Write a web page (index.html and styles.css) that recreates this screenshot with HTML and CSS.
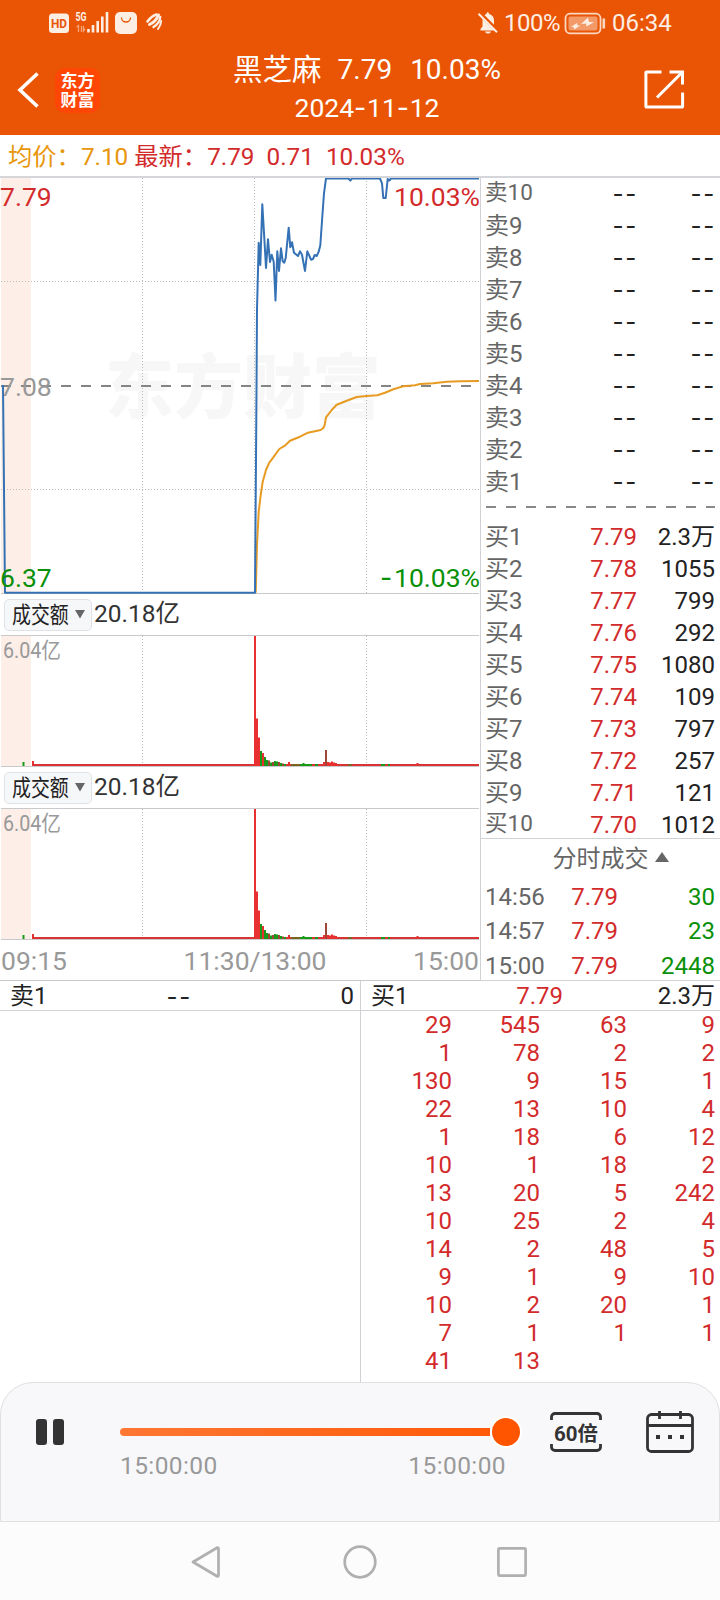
FILE: index.html
```html
<!DOCTYPE html>
<html lang="zh-CN">
<head>
<meta charset="utf-8">
<title>黑芝麻 2024-11-12</title>
<link rel="stylesheet" href="styles.css">
</head>
<body>
<header class="top">
  <div class="status">
    <svg class="status-left" width="120" height="26" viewBox="48 10 120 26">
      <rect x="49" y="13.500" width="20" height="19.500" rx="3.500" fill="#fdeee4"/>
      <text x="51" y="28" class="hd" textLength="16" lengthAdjust="spacingAndGlyphs">HD</text>
      <text x="75.500" y="21" class="g5" textLength="11" lengthAdjust="spacingAndGlyphs">5G</text>
      <path d="M76.500 27l2-1.500v6.500M81.500 26v6M83.500 26v5l1.500-2" stroke="#f6a377" fill="none" stroke-width="1.300"/>
      <path d="M88.500 29v3.500M93 25v7.500M97.700 21v11.500M102.300 16.500v16M107 12v20.500" stroke="#fdeee4" stroke-width="2.600" fill="none"/>
      <rect x="115" y="12" width="22" height="22" rx="5" fill="#fdeee4"/>
      <path d="M121.500 17.500a4.500 4.500 0 0 0 9 0" fill="none" stroke="#e95504" stroke-width="1.300"/>
      <g fill="none" stroke="#fdeee4" stroke-linecap="round">
        <path d="M147.500 21.500C150 18 153 15.500 156.500 14.500" stroke-width="2.600"/>
        <path d="M149.500 24.500C154 22.500 157 19 158.500 15" stroke-width="3"/>
        <path d="M153.500 27C157.500 24.500 160 21 160.200 17" stroke-width="2.400"/>
        <path d="M158 29C160 26.500 161 24 161.200 21" stroke-width="2"/>
      </g>
    </svg>
    <div class="status-right">
      <svg width="22" height="24" viewBox="477 11 22 24">
        <path d="M480.500 30.500v-1.500l2-2.500v-6c0-4 2-6 4-6.500 0-2.500 2.500-2.500 2.500 0 3 .7 5 3 5 6.500v6l2 2.500v1.500z" fill="#fdeee4"/>
        <path d="M485 31.500h6c-1 2.800-5 2.800-6 0z" fill="#fdeee4"/>
        <path d="M479.500 13l18.500 18.500" stroke="#e95504" stroke-width="4"/>
        <path d="M478.500 13.800l18.500 18.500" stroke="#fdeee4" stroke-width="2"/>
      </svg>
      <span class="pct">100%</span>
      <svg class="battery" width="42" height="24" viewBox="564 11 42 24">
        <rect x="565.500" y="13.700" width="35" height="19.600" rx="4.500" fill="none" stroke="#fbd7c2" stroke-width="1.800"/>
        <rect x="568.500" y="16.500" width="29" height="14" rx="2" fill="#f29a68"/>
        <path d="M571 27l6-4 .5 2.500h3l-6.500 4-.5-2.500zM581 24l7-6.500 1 4.500h5l-7.500 4.500-.5-3z" fill="#fdeee4"/>
        <path d="M603.800 18.500v10" stroke="#fbd7c2" stroke-width="2.600"/>
      </svg>
      <span class="clock">06:34</span>
    </div>
  </div>
  <div class="titlebar">
    <svg class="back" width="24" height="40" viewBox="16 70 24 40"><path d="M37.500 73.500L20 90l17.500 16.500" fill="none" stroke="#fff" stroke-width="3.600"/></svg>
    <div class="logo"><span>东方</span><span>财富</span></div>
    <div class="title">
      <div class="title-main"><span class="stock">黑芝麻</span><span>7.79</span><span>10.03%</span></div>
      <div class="title-date">2024<i>-</i>11<i>-</i>12</div>
    </div>
    <svg class="share" width="42" height="42" viewBox="642 68 42 42"><path d="M660.500 72h-15a.6.600 0 0 0-.6.600V106.500a.6.600 0 0 0 .6.600H681a.6.600 0 0 0 .6-.6V92.500M668.500 72h13v12.500M681 72.500L656 97.500" fill="none" stroke="#fff" stroke-width="3"/></svg>
  </div>
</header>

<div class="quote">
  <span class="avg">均价：7.10</span><span class="now">最新：7.79</span><span>0.71</span><span>10.03%</span>
</div>

<main class="market">
  <section class="charts">
    <svg width="480" height="417" viewBox="0 178 480 417" class="chart">
      <rect x="1" y="178" width="30" height="415" fill="#fdeee8"/>
      <text x="105" y="413" class="watermark" textLength="276" lengthAdjust="spacingAndGlyphs">东方财富</text>
      <path d="M1 281.500H479M1 489.500H479M142.500 178V593M254.500 178V593M366.500 178V593" class="dots"/>
      <path d="M1 386H472" class="mid"/>
      <path d="M1 593.500H479" class="axis"/>
      <text x="0" y="205.700" class="lab red">7.79</text>
      <text x="480" y="205.700" class="lab red end">10.03%</text>
      <text x="0" y="396" class="lab gray">7.08</text>
      <path class="line orange" d="M255.700 592.700L257 545 258.700 511.700 260.700 495 262.700 481.700 266 470 269.300 462.700 273.300 457.300 279.300 449 285.300 445.300 290 440.700 300 436.700 308 432.700 320.700 430 323.300 428 324.700 425 326 417.300 331.700 410 336.700 404.700 346.700 400.700 356.700 397 366.700 396 377.300 395.300 385 392.700 393.300 389.300 403.300 386.300 415 385.300 420 384 433.300 383.300 446.700 381.700 460 381.200 479 381"/>
      <path class="line blue" d="M3 385L5 592.700H255L256.300 420 257 310 258.700 242.700 260.300 265 262.300 204.300 264.300 238 266 268 268 239.300 270 262 271.700 254.700 273.700 261.700 275.500 300.500 277.300 251.300 279 271 281 248.300 282.700 261.300 284.300 262.700 285.700 258 288.700 227.700 290.300 247.300 292 242.300 294 252.700 298 256 300 251.300 302 254.700 305 271 307.300 251.300 309 255 311 259.700 313 259 314.700 255 316.700 256 318.700 251.700 320.300 245.300 322.300 216.700 324 193.300 326 178.500H348.500L350.300 180.500 352 178.500H380L382 183.300 383.300 198H385.700L387.700 179 389.300 180.500 391 178.500H479"/>
      <text x="0" y="586.700" class="lab green">6.37</text>
      <text x="480" y="586.700" class="lab green end">10.03%</text>
      <text x="380" y="586.700" class="lab green minus">-</text>
    </svg>

    <div class="picker"><button><span>成交额</span><svg width="10" height="9" viewBox="0 0 10 9"><path d="M0 0H10L5 8.500Z" fill="#666"/></svg></button><b>20.18亿</b></div>
    <svg width="480" height="132" viewBox="0 635 480 132" class="chart">
      <g id="volume">
        <rect x="1" y="636" width="30" height="130" fill="#fdeee8"/>
        <path d="M142.500 636V766M254.500 636V766M366.500 636V766" class="dots"/>
        <path d="M1 635.500H479M1 766.500H479" class="axis"/>
        <text x="3" y="658" class="lab small gray" textLength="58" lengthAdjust="spacingAndGlyphs">6.04亿</text>
        <path d="M33 765H479" stroke="#d93333" stroke-width="2"/>
        <path d="M33 766v-5M255 766V636M257 766V718.500M259 766V737.500M263 766V753M289 766V762M324 766V762M328 766V762M330 766V762.500M332 766V761.500M334 766V762.500M336 766V763M417.500 766V763" stroke="#e93030" stroke-width="2"/>
        <path d="M23.500 766v-4M261 766V751M265 766V757M267 766V760M271 766V762.500M275 766V761M277 766V761.500M281 766V763M285 766V764M303.500 766V763" stroke="#189a18" stroke-width="2"/>
        <path d="M269 766V760.500M273 766V762M279 766V762M283 766V763.500M326 766V750" stroke="#9f4636" stroke-width="2"/>
        <path d="M291 765H301M348 765h4" stroke="#7c6320" stroke-width="2"/>
        <path d="M300 765h12M315 765h3M381 765h4M388 765h2" stroke="#189a18" stroke-width="2"/>
      </g>
    </svg>
    <div class="picker"><button><span>成交额</span><svg width="10" height="9" viewBox="0 0 10 9"><path d="M0 0H10L5 8.500Z" fill="#666"/></svg></button><b>20.18亿</b></div>
    <svg width="480" height="132" viewBox="0 635 480 132" class="chart"><use href="#volume"/></svg>
    <div class="times"><span>09:15</span><span class="noon">11:30/13:00</span><span>15:00</span></div>
  </section>

  <aside class="book">
    <div class="rows sell">
      <div class="row ten"><span>卖10</span><i>--</i><i>--</i></div>
      <div class="row"><span>卖9</span><i>--</i><i>--</i></div>
      <div class="row"><span>卖8</span><i>--</i><i>--</i></div>
      <div class="row"><span>卖7</span><i>--</i><i>--</i></div>
      <div class="row"><span>卖6</span><i>--</i><i>--</i></div>
      <div class="row"><span>卖5</span><i>--</i><i>--</i></div>
      <div class="row"><span>卖4</span><i>--</i><i>--</i></div>
      <div class="row"><span>卖3</span><i>--</i><i>--</i></div>
      <div class="row"><span>卖2</span><i>--</i><i>--</i></div>
      <div class="row"><span>卖1</span><i>--</i><i>--</i></div>
    </div>
    <svg class="split" width="229" height="2"><path d="M0 1H229" stroke="#888" stroke-width="2" stroke-dasharray="10 10"/></svg>
    <div class="rows buy">
      <div class="row"><span>买1</span><em>7.79</em><b>2.3万</b></div>
      <div class="row"><span>买2</span><em>7.78</em><b>1055</b></div>
      <div class="row"><span>买3</span><em>7.77</em><b>799</b></div>
      <div class="row"><span>买4</span><em>7.76</em><b>292</b></div>
      <div class="row"><span>买5</span><em>7.75</em><b>1080</b></div>
      <div class="row"><span>买6</span><em>7.74</em><b>109</b></div>
      <div class="row"><span>买7</span><em>7.73</em><b>797</b></div>
      <div class="row"><span>买8</span><em>7.72</em><b>257</b></div>
      <div class="row"><span>买9</span><em>7.71</em><b>121</b></div>
      <div class="row ten"><span>买10</span><em>7.70</em><b>1012</b></div>
    </div>
    <div class="ticks">
      <div class="ticks-title">分时成交<svg width="14" height="10" viewBox="0 0 14 10"><path d="M7 0L14 10H0Z" fill="#666"/></svg></div>
      <div class="tick"><span>14:56</span><em>7.79</em><u>30</u></div>
      <div class="tick"><span>14:57</span><em>7.79</em><u>23</u></div>
      <div class="tick"><span>15:00</span><em>7.79</em><u>2448</u></div>
    </div>
  </aside>
</main>

<section class="queues">
  <div class="queue">
    <div class="queue-head"><span>卖1</span><i>--</i><b>0</b></div>
  </div>
  <div class="queue">
    <div class="queue-head right"><span>买1</span><em>7.79</em><b>2.3万</b></div>
    <div class="orders">
      <span>29</span><span>545</span><span>63</span><span>9</span>
      <span>1</span><span>78</span><span>2</span><span>2</span>
      <span>130</span><span>9</span><span>15</span><span>1</span>
      <span>22</span><span>13</span><span>10</span><span>4</span>
      <span>1</span><span>18</span><span>6</span><span>12</span>
      <span>10</span><span>1</span><span>18</span><span>2</span>
      <span>13</span><span>20</span><span>5</span><span>242</span>
      <span>10</span><span>25</span><span>2</span><span>4</span>
      <span>14</span><span>2</span><span>48</span><span>5</span>
      <span>9</span><span>1</span><span>9</span><span>10</span>
      <span>10</span><span>2</span><span>20</span><span>1</span>
      <span>7</span><span>1</span><span>1</span><span>1</span>
      <span>41</span><span>13</span>
    </div>
  </div>
</section>

<section class="player">
  <svg class="pause" width="28" height="26"><rect width="11" height="26" rx="3" fill="#333"/><rect x="17" width="11" height="26" rx="3" fill="#333"/></svg>
  <div class="progress">
    <div class="track"><div class="bar"></div><div class="thumb"></div></div>
    <div class="progress-times"><span>15:00:00</span><span>15:00:00</span></div>
  </div>
  <svg class="speed" width="52" height="40" viewBox="0 0 52 40">
    <path d="M1.500 8V5a3.500 3.500 0 0 1 3.500-3.500H47A3.500 3.500 0 0 1 50.500 5V8M1.500 32v3A3.500 3.500 0 0 0 5 38.500H47a3.500 3.500 0 0 0 3.500-3.500V32" fill="none" stroke="#333" stroke-width="2.800"/>
    <text x="4" y="28.500" textLength="44" lengthAdjust="spacingAndGlyphs">60倍</text>
  </svg>
  <svg class="calendar" width="48" height="42" viewBox="0 0 48 42">
    <rect x="1.500" y="3.500" width="45" height="37" rx="4" fill="none" stroke="#333" stroke-width="2.800"/>
    <path d="M1.500 14.500H46.500M13.500 0V8M34.500 0V8" stroke="#333" stroke-width="2.800"/>
    <path d="M10 24h4v4h-4zM22 24h4v4h-4zM34 24h4v4h-4z" fill="#333"/>
  </svg>
</section>

<nav class="nav">
  <svg width="30" height="34" viewBox="190 1544 30 34"><path d="M193 1561L217.500 1546.500Q218.500 1546.500 218.500 1547.500V1574.500Q218.500 1575.500 217.500 1575.500Z" fill="none" stroke="#b0b0b0" stroke-width="2.700" stroke-linejoin="round"/></svg>
  <svg class="home" width="34" height="34"><circle cx="17" cy="17" r="15.300" fill="none" stroke="#b0b0b0" stroke-width="2.700"/></svg>
  <svg width="30" height="30"><rect x="1.400" y="1.400" width="27.200" height="27.200" rx="1.500" fill="none" stroke="#b0b0b0" stroke-width="2.700"/></svg>
</nav>
</body>
</html>
```
FILE: styles.css
```css
* { box-sizing: border-box; }
body {
  margin: 0;
  width: 720px;
  height: 1600px;
  overflow: hidden;
  background: #fff;
  color: #222;
  font: 24px/1 Roboto, "Noto Sans CJK SC", sans-serif;
}
svg { display: block; flex: none; }
i, em { font-style: normal; }
b { font-weight: 400; }
u { text-decoration: none; }

/* header */
.top { height: 135px; background: #e95504; color: #fff; }
.status {
  display: flex;
  justify-content: space-between;
  height: 46px;
  padding: 10px 48px 0 48px;
  color: #fdeee4;
}
.hd { font: 700 13.500px Roboto, sans-serif; fill: #e95504; }
.g5 { font: 700 12px Roboto, sans-serif; fill: #fdeee4; }
.status-right { display: flex; align-items: center; height: 26px; }
.pct { margin-left: 5px; width: 60px; letter-spacing: -.5px; }
.clock { margin-left: 6px; width: 60px; }
.titlebar { display: flex; height: 89px; padding-left: 16px; }
.back { margin-top: 24px; }
.logo {
  display: flex;
  flex-direction: column;
  justify-content: center;
  align-items: center;
  width: 45px;
  height: 45px;
  margin: 22px 0 0 15px;
  border-radius: 10px;
  background: #ff4604;
  font-size: 17px;
  font-weight: 700;
  line-height: 19px;
}
.title {
  display: flex;
  flex-direction: column;
  align-items: center;
  width: 380px;
  margin: 4px 0 0 77px;
}
.title-main { display: flex; align-items: center; gap: 18px; font-size: 28px; line-height: 40px; }
.stock { font-size: 29.500px; margin-right: -2px; }
.title-date { font-size: 26.500px; line-height: 35px; }
.title-date i { font-family: Inter, sans-serif; letter-spacing: .7px; }
.share { margin: 22px 0 0 86px; }

.quote {
  display: flex;
  gap: 12px;
  height: 43px;
  padding: 2px 0 0 8px;
  border-bottom: 2px solid #d4d6da;
  font-size: 24.300px;
  line-height: 40px;
  color: #d32b2b;
  white-space: nowrap;
}
.avg { color: #e8960c; margin-right: -6px; }

/* charts */
.market { display: flex; height: 803px; border-bottom: 1px solid #d0d2d5; }
.charts { width: 480px; }
.chart { overflow: hidden; }
.charts > .chart:first-child { margin-bottom: -1px; }
.dots { fill: none; stroke: #bbb; stroke-width: 1; stroke-dasharray: 1 2; }
.mid { stroke: #858585; stroke-width: 2; stroke-dasharray: 10 10; }
.axis { stroke: #c9c9cb; stroke-width: 1; }
.line { fill: none; stroke-width: 2; stroke-linejoin: round; }
.blue { stroke: #3572b5; }
.orange { stroke: #e79b22; }
.watermark { font: 900 70px "Noto Sans CJK SC", sans-serif; fill: #f7f7f7; }
.lab { font-family: Roboto, "Noto Sans CJK SC", sans-serif; font-size: 26.500px; }
.small { font-size: 21.500px; }
.end { text-anchor: end; }
.red { fill: #d32b2b; }
.green { fill: #089008; }
.gray { fill: #999; }
.minus { font-family: Inter, sans-serif; }
.picker { display: flex; align-items: center; gap: 2px; height: 41px; padding-left: 4px; }
.picker button {
  display: flex;
  align-items: center;
  width: 88px;
  height: 32px;
  padding: 0 0 0 7px;
  border: 1px solid #dfe2e6;
  border-radius: 5px;
  background: #f6f7f9;
  color: #222;
  font: 22.500px/26px "Noto Sans CJK SC", sans-serif;
}
.picker button span { width: 63px; margin-top: -4px; white-space: nowrap; transform: scaleX(.84); transform-origin: left; }
.picker b { color: #333; font-size: 24.500px; }
.times {
  display: flex;
  justify-content: space-between;
  height: 41px;
  padding: 0 1px;
  border-bottom: 1px solid #c9c9cb;
  color: #999;
  font-size: 26.500px;
  line-height: 42px;
}
.noon { padding-left: 30px; }

/* order book */
.book { width: 240px; border-left: 1px solid #d0d2d5; }
.row {
  display: grid;
  grid-template-columns: 78px 74px 78px;
  height: 32px;
  padding-left: 4px;
  line-height: 32px;
  text-align: right;
  white-space: nowrap;
}
.row span { color: #666; text-align: left; }
.row i { margin-right: -1px; }
.row i, .queue-head i { font-family: Inter, sans-serif; letter-spacing: 1.700px; }
.row em, .tick em, .queue-head em, .orders { color: #d32b2b; }
.ten span { font-size: 22.500px; line-height: 28px; }
.split { margin: 8px 0 13px 5px; }
.buy { height: 318px; border-bottom: 1px solid #d0d2d5; }
.ticks-title {
  display: flex;
  align-items: center;
  justify-content: center;
  gap: 6px;
  height: 40px;
  padding-left: 20px;
  color: #666;
}
.ticks-title svg { margin-top: -5px; }
.tick {
  display: grid;
  grid-template-columns: 70px 63px 97px;
  height: 34.300px;
  padding-left: 4px;
  line-height: 36px;
  text-align: right;
}
.tick span { color: #666; text-align: left; }
.tick u { color: #089008; }

/* order queues */
.queues { display: flex; height: 401px; }
.queue { width: 360px; }
.queue + .queue { border-left: 1px solid #d0d2d5; }
.queue-head {
  display: grid;
  grid-template-columns: 106px 76px 162px;
  height: 30px;
  padding-left: 10px;
  border-bottom: 1px solid #d0d2d5;
  line-height: 31px;
  text-align: right;
}
.queue-head.right { grid-template-columns: 114px 78px 152px; }
.queue-head span { text-align: left; }
.orders {
  display: grid;
  grid-template-columns: 91px 88px 87px 88px;
  grid-auto-rows: 28px;
  line-height: 28px;
  text-align: right;
}

/* replay controls */
.player {
  display: flex;
  height: 140px;
  padding: 0 25px 0 35px;
  border: 1px solid #e0e0e2;
  border-radius: 33px 33px 0 0;
  background: #f8f8fa;
}
.pause { margin-top: 36px; }
.progress { width: 402px; margin: 34px 0 0 56px; }
.track { display: flex; align-items: center; height: 30px; }
.bar { width: 370px; height: 8px; border-radius: 4px 0 0 4px; background: linear-gradient(90deg, #ff7733, #ff5a08); }
.thumb { flex: none; width: 32px; height: 32px; border: 2px solid #fff; border-radius: 50%; background: #ff5500; }
.progress-times {
  display: flex;
  justify-content: space-between;
  width: 386px;
  color: #999;
  font-size: 24.500px;
  letter-spacing: .4px;
  line-height: 38px;
}
.speed { margin: 29px 0 0 28px; }
.speed text { font: 700 20px Roboto, "Noto Sans CJK SC", sans-serif; fill: #333; }
.calendar { margin: 28px 0 0 44px; }

.nav {
  display: flex;
  align-items: center;
  justify-content: space-between;
  height: 79px;
  padding: 0 193px 0 190px;
  background: #fcfcfc;
}
.home { margin-left: 2px; }
```
